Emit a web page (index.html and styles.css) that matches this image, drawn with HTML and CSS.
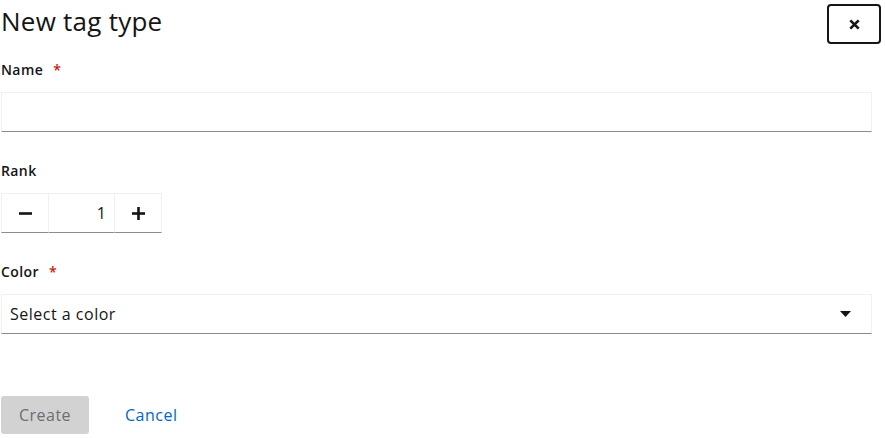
FILE: index.html
```html
<!DOCTYPE html>
<html lang="en">
<head>
<meta charset="utf-8">
<title>New tag type</title>
<link rel="stylesheet" href="styles.css">
</head>
<body>
<div class="modal">
  <header class="header">
    <h1 class="title">New tag type</h1>
    <button class="close" aria-label="Close">
      <svg width="11" height="11" viewBox="0 0 11 11"><path d="M1.3 1.3 L9.7 9.7 M9.7 1.3 L1.3 9.7" stroke="#151515" stroke-width="2.6" stroke-linecap="butt"/></svg>
    </button>
  </header>
  <form class="form">
    <div class="group">
      <label class="label">Name <span class="req">*</span></label>
      <input class="control" type="text">
    </div>
    <div class="group">
      <label class="label">Rank</label>
      <div class="number">
        <button type="button" class="step"><svg width="13" height="13" viewBox="0 0 13 13"><rect x="0" y="5.2" width="13" height="2.6" fill="#151515"/></svg></button>
        <input class="num-input" type="text" value="1">
        <button type="button" class="step"><svg width="13" height="13" viewBox="0 0 13 13"><rect x="0" y="5.2" width="13" height="2.6" fill="#151515"/><rect x="5.2" y="0" width="2.6" height="13" fill="#151515"/></svg></button>
      </div>
    </div>
    <div class="group">
      <label class="label">Color <span class="req">*</span></label>
      <div class="select">
        <span class="select-text">Select a color</span>
        <svg width="11" height="6" viewBox="0 0 11 6"><path d="M0 0 H11 L5.5 6 Z" fill="#151515"/></svg>
      </div>
    </div>
  </form>
  <footer class="footer">
    <button type="button" class="btn-primary" disabled>Create</button>
    <button type="button" class="btn-link">Cancel</button>
  </footer>
</div>
</body>
</html>
```

FILE: styles.css
```css
* { box-sizing: border-box; }
body {
  margin: 0;
  font-family: "Open Sans", "Noto Sans", sans-serif;
  color: #151515;
  background: #fff;
}
.modal {
  width: 872px;
  padding-left: 1px;
}
.header {
  display: flex;
  justify-content: space-between;
  align-items: flex-start;
  height: 60px;
}
.title {
  margin: 4px 0 0 0;
  font-size: 26px;
  font-weight: 400;
  line-height: 34px;
  letter-spacing: 0.25px;
}
.close {
  margin-top: 4px;
  margin-right: -9px;
  width: 54px;
  height: 40px;
  border: 2px solid #151515;
  border-radius: 4px;
  background: #fff;
  display: flex;
  align-items: center;
  justify-content: center;
  padding: 0;
}
.form {
  display: flex;
  flex-direction: column;
  gap: 29px;
}
.group {
  display: flex;
  flex-direction: column;
  gap: 12px;
}
.label {
  font-size: 14px;
  font-weight: 600;
  line-height: 20px;
  letter-spacing: 0.4px;
}
.req {
  color: #c9190b;
  margin-left: 6px;
}
.control {
  height: 40px;
  width: 100%;
  border: 1px solid #f0f0f0;
  border-bottom-color: #8a8d90;
  font: inherit;
}
.number {
  display: flex;
  height: 40px;
  width: 161px;
}
.step {
  width: 48px;
  height: 40px;
  background: #fff;
  border: 1px solid #f0f0f0;
  border-bottom-color: #8a8d90;
  display: flex;
  align-items: center;
  justify-content: center;
  padding: 0;
}
.num-input {
  width: 65px;
  height: 40px;
  border: 1px solid #f0f0f0;
  border-left: 0;
  border-right: 0;
  border-bottom-color: #8a8d90;
  text-align: right;
  padding-right: 8px;
  font: inherit;
  font-size: 16px;
  color: #151515;
}
.select {
  height: 40px;
  border: 1px solid #f0f0f0;
  border-bottom-color: #8a8d90;
  display: flex;
  align-items: center;
  justify-content: space-between;
  padding: 0 20px 0 8px;
  font-size: 16px;
  letter-spacing: 0.5px;
}
.footer {
  display: flex;
  align-items: center;
  gap: 12px;
  margin-top: 62px;
}
.btn-primary {
  width: 88px;
  height: 38px;
  border: 0;
  border-radius: 3px;
  background: #d2d2d2;
  color: #6a6e73;
  font: inherit;
  font-size: 16px;
  letter-spacing: 0.5px;
}
.btn-link {
  background: none;
  border: 0;
  color: #06c;
  font: inherit;
  font-size: 16px;
  letter-spacing: 0.5px;
  padding: 0 24px;
}
```
